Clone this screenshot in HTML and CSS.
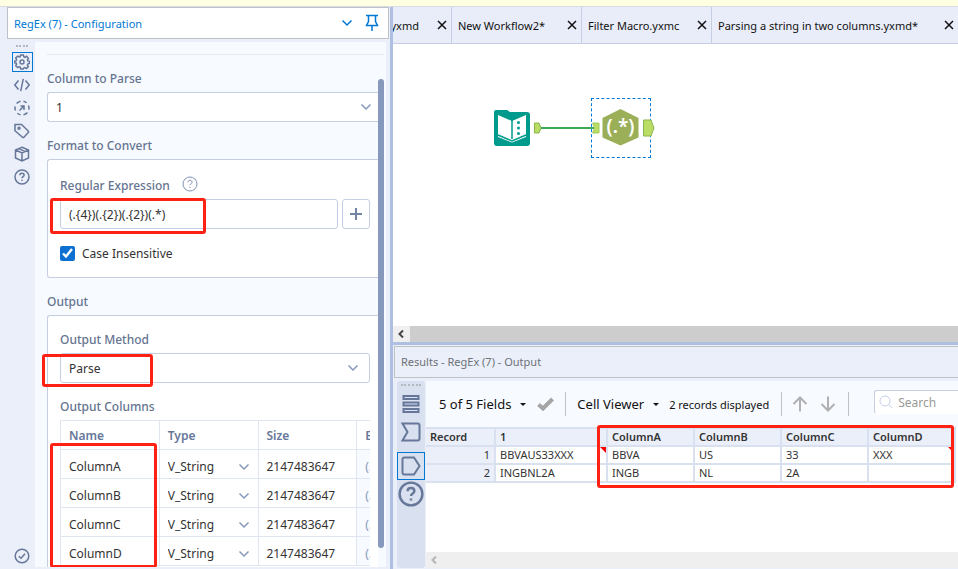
FILE: index.html
```html
<!DOCTYPE html>
<html lang="en">
<head>
  <meta charset="UTF-8">
  <meta name="viewport" content="width=device-width, initial-scale=1.0">
  <title>RegEx (7) - Configuration</title>
  <link rel="stylesheet" href="styles.css">
</head>
<body>
  <svg class="sprite" aria-hidden="true">
    <symbol id="chevron" viewBox="0 0 12 8"><path d="M1.500 1.500 6 6l4.500-4.500"/></symbol>
    <symbol id="close" viewBox="0 0 10 10"><path d="M1 1l8 8M9 1 1 9"/></symbol>
    <symbol id="help" viewBox="0 0 16 16">
      <circle cx="8" cy="8" r="7"/>
      <path d="M5.900 6.300c0-1.300 1-2 2.100-2s2.100.7 2.100 1.900C10.100 7.600 8 7.700 8 9.200M8 10.800v1.200"/>
    </symbol>
  </svg>

  <div class="notice"></div>

  <div class="workspace">
    <section class="config">
      <header class="config-title">
        <h1>RegEx (7) - Configuration</h1>
        <button class="icon-btn" aria-label="Window options"><svg class="chevron" width="12" height="8"><use href="#chevron"/></svg></button>
        <button class="icon-btn" aria-label="Pin">
          <svg width="14" height="18" viewBox="0 0 14 18"><path d="M1 1.500h12M3.500 1.500v6L1.500 11.500h11L10.500 7.500v-6M7 11.500V17"/></svg>
        </button>
      </header>

      <div class="config-main">
        <nav class="rail">
          <span class="grip"></span>
          <button class="rail-btn active" aria-label="Configuration">
            <svg width="16" height="16" viewBox="0 0 16 16"><path d="M6.600 1h2.800l.4 1.800 1.100.5 1.600-1 1.900 2-.9 1.500.4 1.100 1.600.4v2.100l-1.600.5-.5 1.200.9 1.500-1.900 1.900-1.600-.9-1.100.4L9.300 15H6.700l-.4-1.800-1.200-.5-1.500.9-1.900-1.900.9-1.600-.5-1.100L.6 8.900V7.100l1.600-.5.4-1.100L1.700 4l2-1.900 1.500.9 1.100-.4z"/><circle cx="8" cy="8" r="2"/></svg>
          </button>
          <button class="rail-btn" aria-label="XML view">
            <svg width="16" height="16" viewBox="0 0 16 16"><path d="M4.500 3.500.8 8l3.700 4.500M11.500 3.500 15.200 8l-3.700 4.500M9.300 1.800 6.700 14.200"/></svg>
          </button>
          <button class="rail-btn" aria-label="Navigation">
            <svg width="16" height="16" viewBox="0 0 16 16"><path d="M6.500 1.200A7 7 0 0 0 2.600 3.600M1.200 6.300a7 7 0 0 0 .3 4.100M3.400 13.200a7 7 0 0 0 3.100 1.600M9.500 14.800a7 7 0 0 0 3.900-2.400M14.800 9.700a7 7 0 0 0-.3-4.100M12.600 2.800a7 7 0 0 0-3.100-1.600M5.500 10.500l4.500-4.500M6.500 6H10v4"/></svg>
          </button>
          <button class="rail-btn" aria-label="Annotation">
            <svg width="16" height="16" viewBox="0 0 16 16"><path d="M1 1.500h6.500l7 6.800v1L9.700 14.500H8.800L1 7.700z"/><circle cx="5" cy="5.300" r="1"/></svg>
          </button>
          <button class="rail-btn" aria-label="Package">
            <svg width="16" height="16" viewBox="0 0 16 16"><path d="M8 1.200 14.500 4v8L8 14.900 1.500 12V4zM1.500 4 8 7l6.500-3M8 7v7.800M4.700 2.600l6.500 3"/></svg>
          </button>
          <button class="rail-btn" aria-label="Help"><svg width="16" height="16"><use href="#help"/></svg></button>
          <button class="rail-btn rail-end" aria-label="Status">
            <svg width="16" height="16" viewBox="0 0 16 16"><circle cx="8" cy="8" r="6.800"/><path d="M4.800 8.300 7 10.300l4-4.500"/></svg>
          </button>
        </nav>

        <form class="config-form">
          <div class="config-scroll">
            <label class="section-label" for="column">Column to Parse</label>
            <div class="select column-select">
              <select id="column"><option>1</option></select>
              <svg class="chevron" width="12" height="8"><use href="#chevron"/></svg>
            </div>

            <h2 class="section-label">Format to Convert</h2>
            <div class="group">
              <div class="label-row">
                <label class="field-label" for="regex">Regular Expression</label>
                <svg class="hint" width="16" height="16"><use href="#help"/></svg>
              </div>
              <div class="regex-row">
                <input class="text-input" id="regex" type="text" value="(.{4})(.{2})(.{2})(.*)">
                <button class="add-btn" type="button" aria-label="Insert expression">
                  <svg width="14" height="14" viewBox="0 0 14 14"><path d="M7 1v12M1 7h12"/></svg>
                </button>
                <span class="mark mark-regex"></span>
              </div>
              <label class="check"><input type="checkbox" checked> Case Insensitive</label>
            </div>

            <h2 class="section-label">Output</h2>
            <div class="group group-output">
              <label class="field-label" for="method">Output Method</label>
              <div class="select">
                <select id="method"><option>Parse</option></select>
                <svg class="chevron" width="12" height="8"><use href="#chevron"/></svg>
                <span class="mark mark-method"></span>
              </div>

              <h3 class="field-label">Output Columns</h3>
              <div class="columns-wrap">
                <div class="columns-clip">
                  <table class="columns">
                    <thead>
                      <tr><th>Name</th><th>Type</th><th>Size</th><th>Expression</th></tr>
                    </thead>
                    <tbody>
                      <tr>
                        <td>ColumnA</td>
                        <td><div class="cell-select"><select aria-label="Type of ColumnA"><option>V_String</option></select><svg class="chevron" width="12" height="8"><use href="#chevron"/></svg></div></td>
                        <td>2147483647</td>
                        <td>(.{4})</td>
                      </tr>
                      <tr>
                        <td>ColumnB</td>
                        <td><div class="cell-select"><select aria-label="Type of ColumnB"><option>V_String</option></select><svg class="chevron" width="12" height="8"><use href="#chevron"/></svg></div></td>
                        <td>2147483647</td>
                        <td>(.{2})</td>
                      </tr>
                      <tr>
                        <td>ColumnC</td>
                        <td><div class="cell-select"><select aria-label="Type of ColumnC"><option>V_String</option></select><svg class="chevron" width="12" height="8"><use href="#chevron"/></svg></div></td>
                        <td>2147483647</td>
                        <td>(.{2})</td>
                      </tr>
                      <tr>
                        <td>ColumnD</td>
                        <td><div class="cell-select"><select aria-label="Type of ColumnD"><option>V_String</option></select><svg class="chevron" width="12" height="8"><use href="#chevron"/></svg></div></td>
                        <td>2147483647</td>
                        <td>(.*)</td>
                      </tr>
                    </tbody>
                  </table>
                </div>
                <span class="mark mark-columns"></span>
              </div>
            </div>
          </div>
          <div class="scroll-track"><span class="scroll-thumb"></span></div>
        </form>
      </div>
    </section>

    <main class="main">
      <nav class="tabs">
        <div class="tab tab-cut"><a href="#">Workflow.yxmd</a><button class="close" aria-label="Close tab"><svg width="10" height="10"><use href="#close"/></svg></button></div>
        <div class="tab"><a href="#">New Workflow2*</a><button class="close" aria-label="Close tab"><svg width="10" height="10"><use href="#close"/></svg></button></div>
        <div class="tab"><a href="#">Filter Macro.yxmc</a><button class="close" aria-label="Close tab"><svg width="10" height="10"><use href="#close"/></svg></button></div>
        <div class="tab tab-last"><a href="#">Parsing a string in two columns.yxmd*</a><button class="close" aria-label="Close tab"><svg width="10" height="10"><use href="#close"/></svg></button></div>
      </nav>

      <div class="canvas">
        <svg class="node node-input" width="56" height="38" viewBox="0 0 56 38">
          <path fill="#009b8d" d="M3 1h11l3 2h17q3 0 3 3v28q0 3-3 3H4q-3 0-3-3V3q0-2 2-2z"/>
          <path fill="#fff" d="M5 6l14 6v21.500L5 28zM33 6l-14 6v21.500L33 28z"/>
          <path fill="none" stroke="#009b8d" stroke-width="1.500" d="M19 11v19M5 26l14 6 14-6"/>
          <circle cx="25.500" cy="13.500" r="1.500" fill="#009b8d"/><circle cx="25.500" cy="19" r="1.500" fill="#009b8d"/><circle cx="25.500" cy="24.500" r="1.500" fill="#009b8d"/>
          <path fill="#bbdc65" stroke="#86b54d" d="M41.500 14h4.500l2 5-2 5h-4.500z"/>
        </svg>
        <span class="wire"></span>
        <div class="node node-regex">
          <svg width="66" height="60" viewBox="0 0 66 60">
            <path fill="#bbdc65" stroke="#a5cc5c" d="M.5 24h6.500v10H.500l2-5z"/>
            <path fill="#9baf59" d="M28.500 10 46.500 19v19.500L28.500 46.500 10.500 38.500V19z"/>
            <path fill="#bbdc65" stroke="#86b54d" d="M51.500 21h7.500l3 8-3 8h-7.500z"/>
            <text class="node-glyph" x="28.500" y="34" text-anchor="middle">(.*)</text>
          </svg>
        </div>
      </div>

      <div class="hscroll hscroll-canvas">
        <button class="hscroll-btn" aria-label="Scroll left"><svg width="7" height="8" viewBox="0 0 7 8"><path d="M5 .5 1.500 4 5 7.500"/></svg></button>
        <span class="hscroll-thumb"></span>
      </div>

      <section class="results">
        <h2 class="results-title">Results - RegEx (7) - Output</h2>
        <div class="results-body">
          <nav class="results-rail">
            <span class="results-grip"></span>
            <button class="results-btn" aria-label="Messages">
              <svg width="20" height="20" viewBox="0 0 20 20"><path d="M2.500 2h15v3h-15zM2.500 8.500h15v3h-15zM2.500 15h15v3h-15z"/></svg>
            </button>
            <button class="results-btn" aria-label="Input anchor">
              <svg width="20" height="20" viewBox="0 0 20 20"><path d="M1.500 1.500h15q2 0 2 2v13q0 2-2 2h-15L6.500 10z"/></svg>
            </button>
            <button class="results-btn active" aria-label="Output anchor">
              <svg width="20" height="20" viewBox="0 0 20 20"><path d="M3.500 1.500H13l5.500 8.500-5.500 8.500H3.500q-2 0-2-2v-13q0-2 2-2z"/></svg>
            </button>
            <button class="results-btn" aria-label="Help"><svg width="26" height="26"><use href="#help"/></svg></button>
          </nav>

          <div class="results-content">
            <div class="toolbar">
              <button class="tool tool-fields">5 of 5 Fields <span class="caret"></span></button>
              <svg class="tick" width="17" height="14" viewBox="0 0 17 14"><path d="M1.500 7.500 6 11.500 15.500 2"/></svg>
              <span class="sep"></span>
              <button class="tool tool-viewer">Cell Viewer <span class="caret"></span></button>
              <span class="count">2 records displayed</span>
              <span class="sep"></span>
              <button class="icon-btn arrow" aria-label="Previous"><svg width="16" height="16" viewBox="0 0 16 16"><path d="M8 15.500V2M1.500 8 8 1.500 14.500 8"/></svg></button>
              <button class="icon-btn arrow" aria-label="Next"><svg width="16" height="16" viewBox="0 0 16 16"><path d="M8 .5V14M1.500 8 8 14.500 14.500 8"/></svg></button>
              <span class="sep"></span>
              <label class="search">
                <svg width="14" height="14" viewBox="0 0 14 14"><circle cx="6" cy="6" r="5"/><path d="M9.500 9.500 13 13"/></svg>
                <input type="search" placeholder="Search" aria-label="Search">
              </label>
            </div>

            <div class="grid-wrap">
              <table class="grid">
                <thead>
                  <tr><th class="record">Record</th><th class="raw">1</th><th>ColumnA</th><th>ColumnB</th><th>ColumnC</th><th>ColumnD</th></tr>
                </thead>
                <tbody>
                  <tr><td class="record">1</td><td class="flag">BBVAUS33XXX</td><td>BBVA</td><td>US</td><td>33</td><td class="flag">XXX</td></tr>
                  <tr><td class="record">2</td><td>INGBNL2A</td><td>INGB</td><td>NL</td><td>2A</td><td></td></tr>
                </tbody>
              </table>
              <span class="mark mark-grid"></span>
            </div>

            <div class="hscroll hscroll-results">
              <button class="hscroll-btn" aria-label="Scroll left"><svg width="7" height="8" viewBox="0 0 7 8"><path d="M5 .5 1.500 4 5 7.500"/></svg></button>
            </div>
          </div>
        </div>
      </section>
    </main>
  </div>
</body>
</html>
```

FILE: styles.css
```css
:root {
  --panel: #ebeff9;
  --form: #f7faff;
  --border: #c5cee3;
  --grid-line: #d9e0ef;
  --label: #65748f;
  --icon: #66779a;
  --blue: #0078d4;
  --red: #ff2113;
}

* {
  margin: 0;
  padding: 0;
  box-sizing: border-box;
}

body {
  display: flex;
  flex-direction: column;
  height: 100vh;
  overflow: hidden;
  font-family: "Noto Sans", sans-serif;
  font-size: 12px;
  color: #333;
  background-color: var(--panel);
}

button {
  background: none;
  border: none;
  font: inherit;
  color: inherit;
}

select,
input {
  font: inherit;
  color: inherit;
}

a {
  color: inherit;
  text-decoration: none;
}

svg {
  display: block;
  fill: none;
  stroke: currentColor;
}

.sprite {
  position: absolute;
  width: 0;
  height: 0;
}

.notice {
  flex: none;
  height: 6px;
  background-color: #ffffe1;
}

.workspace {
  flex: 1;
  display: flex;
  min-height: 0;
  border-top: 1px solid #d9dce3;
}

/* red highlight boxes */
.mark {
  position: absolute;
  border: 3px solid var(--red);
  border-radius: 3px;
  pointer-events: none;
}

.mark-regex {
  top: -1px;
  left: -10px;
  width: 156px;
  height: 36px;
}

.mark-method {
  top: 1px;
  left: -18px;
  width: 111px;
  height: 33px;
}

.mark-columns {
  top: 23px;
  left: -10px;
  width: 107px;
  height: 125px;
}

.mark-grid {
  top: -2px;
  left: 171px;
  width: 357px;
  height: 63px;
}

/* configuration panel */
.config {
  flex: none;
  display: flex;
  flex-direction: column;
  width: 393px;
  padding-left: 7px;
  border-right: 3px solid #afbfe2;
}

.config-title {
  display: flex;
  align-items: center;
  gap: 12px;
  height: 32px;
  margin-right: 1px;
  padding: 0 9px 0 6px;
  background-color: #fff;
  border: 1px solid #bfc2c7;
  color: var(--blue);
}

.config-title h1 {
  flex: 1;
  font-size: 11px;
  font-weight: 400;
}

.config-title svg {
  stroke-width: 1.5;
}

.config-main {
  flex: 1;
  display: flex;
  min-height: 0;
  padding: 3px 4px 2px 0;
}

.rail {
  flex: none;
  display: flex;
  flex-direction: column;
  align-items: center;
  gap: 3px;
  width: 28px;
  padding: 3px 0 1px 2px;
}

.grip {
  width: 12px;
  height: 4px;
  border-top: 2px dotted #b4b7bd;
}

.rail-btn {
  display: flex;
  align-items: center;
  justify-content: center;
  width: 21px;
  height: 20px;
  color: var(--icon);
}

.rail-btn svg {
  stroke-width: 1.5;
}

.rail-btn.active {
  outline: 1px solid var(--blue);
  outline-offset: -1px;
}

.rail-end {
  margin-top: auto;
}

.config-form {
  flex: 1;
  display: flex;
  min-width: 0;
  padding: 12px 2px 0 12px;
  overflow: hidden;
  background-color: var(--form);
}

.config-scroll {
  flex: 1;
  min-width: 0;
  padding-top: 14px;
  border-top: 1px solid #e4e9f4;
}

.scroll-track {
  flex: none;
  width: 6px;
  padding-top: 24px;
  border-top: 1px solid #e4e9f4;
}

.scroll-thumb {
  display: block;
  height: calc(100% - 19px);
  border-radius: 3px;
  background-color: #8698bb;
}

.section-label,
.field-label {
  display: block;
  font-size: 12px;
  font-weight: 500;
  line-height: 20px;
  color: var(--label);
}

.section-label {
  margin-bottom: 3px;
}

.select {
  position: relative;
  height: 30px;
}

.select select {
  width: 100%;
  height: 100%;
  padding: 0 8px;
  appearance: none;
  background-color: #fff;
  border: 1px solid var(--border);
  border-radius: 3px;
  font-size: 12px;
}

.select .chevron {
  position: absolute;
  top: 11px;
  right: 11px;
}

.chevron {
  stroke-width: 1.5;
}

.select .chevron,
.cell-select .chevron {
  color: #8698bb;
  pointer-events: none;
}

.column-select {
  margin-bottom: 14px;
}

.column-select select,
.group {
  border: 1px solid var(--border);
  border-right: none;
  border-radius: 3px 0 0 3px;
}

.column-select .chevron {
  right: 6px;
}

.group {
  margin-bottom: 14px;
  padding: 16px 8px 16px 12px;
  background-color: #fff;
}

.group-output {
  height: 300px;
  padding-top: 14px;
  margin-bottom: 0;
}

.label-row {
  display: flex;
  gap: 12px;
}

.hint {
  color: #7f90b4;
}

.regex-row {
  position: relative;
  display: flex;
  gap: 4px;
  margin: 3px 0 16px;
}

.text-input {
  flex: 1;
  min-width: 0;
  height: 30px;
  padding: 0 8px;
  background-color: #fff;
  border: 1px solid var(--border);
  border-radius: 3px;
}

.add-btn {
  display: flex;
  align-items: center;
  justify-content: center;
  width: 28px;
  height: 30px;
  border: 1px solid var(--border);
  border-radius: 3px;
  color: #7485a3;
}

.add-btn svg {
  stroke-width: 2;
}

.check {
  display: flex;
  align-items: center;
  gap: 7px;
  height: 16px;
}

.check input {
  width: 15px;
  height: 15px;
  accent-color: #0c70d2;
}

.group-output .field-label {
  margin-bottom: 3px;
}

.group-output .select {
  margin-bottom: 14px;
}

.columns-wrap {
  position: relative;
}

.columns-clip {
  overflow: hidden;
}

.columns {
  width: 396px;
  table-layout: fixed;
  border-collapse: collapse;
}

.columns th,
.columns td {
  height: 29px;
  padding: 0 8px;
  border: 1px solid #dfe5f1;
  text-align: left;
}

.columns td {
  padding-top: 5px;
}

.columns th {
  font-weight: 600;
  color: #66779a;
}

.columns td:last-child {
  background-color: var(--form);
  color: #8698bb;
}

.cell-select {
  position: relative;
}

.cell-select select {
  width: 100%;
  appearance: none;
  background: none;
  border: none;
}

.cell-select .chevron {
  position: absolute;
  top: 5px;
  right: 0;
}

/* workflow area */
.main {
  flex: 1;
  display: flex;
  flex-direction: column;
  min-width: 0;
  background-color: #fff;
}

.tabs {
  flex: none;
  display: flex;
  height: 37px;
  background-color: #e9edf9;
  border-bottom: 1px solid var(--border);
  font-size: 11px;
  color: #111;
}

.tab {
  flex: none;
  display: flex;
  align-items: center;
  justify-content: space-between;
  width: 130px;
  padding: 0 4px 0 6px;
  border-right: 1px solid var(--border);
  white-space: nowrap;
}

.tab-cut {
  width: 59px;
  justify-content: flex-end;
  gap: 18px;
  overflow: hidden;
}

.tab-last {
  flex: 1 0 auto;
  border-right: none;
}

.close svg {
  stroke-width: 1.5;
}

.canvas {
  position: relative;
  flex: 1;
  min-height: 0;
}

.node {
  position: absolute;
}

.node svg,
svg.node {
  stroke: none;
}

.node-input {
  top: 65px;
  left: 100px;
}

.node-regex {
  top: 54px;
  left: 198px;
  width: 60px;
  height: 60px;
  border: 1px dashed var(--blue);
}

.node-glyph {
  fill: #fff;
  font-size: 19px;
  font-weight: 600;
}

.wire {
  position: absolute;
  top: 83px;
  left: 148px;
  width: 53px;
  height: 2px;
  background-color: #3dab55;
}

.hscroll {
  flex: none;
  display: flex;
  height: 16px;
  background-color: #efefef;
}

.hscroll-btn {
  display: flex;
  align-items: center;
  justify-content: center;
  width: 17px;
  color: #444;
}

.hscroll-btn svg {
  stroke-width: 2;
}

.hscroll-thumb {
  flex: 1;
  background-color: #cdcdcd;
}

.hscroll-results .hscroll-btn {
  color: #b5b5b5;
}

/* results window */
.results {
  flex: none;
  display: flex;
  flex-direction: column;
  height: 227px;
  border-top: 3px solid #afbfe2;
  background-color: var(--panel);
}

.results-title {
  height: 32px;
  margin: 1px 0 0 1px;
  padding-left: 6px;
  border: 1px solid #bfc2c7;
  border-right: none;
  font-size: 11px;
  font-weight: 400;
  line-height: 30px;
  color: #6d7178;
}

.results-body {
  flex: 1;
  display: flex;
  min-height: 0;
  padding: 3px 0 1px 4px;
}

.results-rail {
  flex: none;
  display: flex;
  flex-direction: column;
  align-items: center;
  width: 28px;
  margin-right: 1px;
  border-radius: 3px;
  background-color: var(--grid-line);
}

.results-grip {
  width: 20px;
  height: 9px;
  padding-top: 3px;
}

.results-grip::before {
  content: "";
  display: block;
  border-top: 2px dotted #b4b7bd;
}

.results-btn {
  display: flex;
  align-items: center;
  justify-content: center;
  width: 28px;
  height: 28px;
  color: #66779a;
}

.results-btn svg {
  stroke-width: 2;
}

.results-btn use {
  stroke-width: 1.5;
}

.results-btn.active {
  margin-top: 6px;
  border: 1px solid var(--blue);
}

.results-content {
  flex: 1;
  display: flex;
  flex-direction: column;
  min-width: 0;
  overflow: hidden;
  background-color: #fff;
}

.toolbar {
  flex: none;
  display: flex;
  align-items: center;
  height: 46px;
  padding-left: 13px;
  background-color: var(--form);
  color: #111;
  white-space: nowrap;
}

.tool {
  display: flex;
  align-items: center;
  gap: 9px;
  font-size: 13px;
}

.caret {
  border: 3px solid transparent;
  border-top-color: #111;
  border-bottom: none;
}

.tick {
  margin: 0 11px;
  color: #a5a5a5;
  stroke-width: 4;
}

.sep {
  width: 1px;
  height: 24px;
  background-color: #bfc2c7;
}

.tool-viewer {
  margin: 0 10px 0 11px;
}

.count {
  margin-right: 12px;
  font-size: 11px;
}

.arrow {
  margin-right: 12px;
  color: #b0b0b0;
}

.arrow svg {
  stroke-width: 2;
}

.sep + .icon-btn {
  margin-left: 10px;
}

.search {
  flex: 1;
  display: flex;
  align-items: center;
  gap: 5px;
  min-width: 0;
  height: 24px;
  margin: 0 0 4px 25px;
  padding-left: 4px;
  border: 1px solid var(--border);
  border-right: none;
  border-bottom-color: #fff;
  border-radius: 3px 0 0 3px;
  background-color: #fff;
  color: #c5d0e6;
}

.search svg {
  flex: none;
}

.search input {
  flex: 1;
  min-width: 0;
  border: none;
  background: none;
}

.search input::placeholder {
  color: #999;
}

.grid-wrap {
  position: relative;
  flex: 1;
}

.grid {
  width: 530px;
  table-layout: fixed;
  border-collapse: separate;
  border-spacing: 0;
  border-top: 2px solid var(--grid-line);
  font-size: 11px;
}

.grid th,
.grid td {
  position: relative;
  height: 18px;
  padding: 0 4px;
  border-right: 2px solid var(--grid-line);
  border-bottom: 2px solid var(--grid-line);
  line-height: 16px;
  text-align: left;
}

.grid th {
  font-weight: 600;
  background-color: #ebeff9;
}

.grid .record {
  width: 70px;
  background-color: #ebeff9;
}

.grid td.record {
  text-align: right;
}

.grid .raw {
  width: 112px;
}

/* truncated-value corner */
.flag::after {
  content: "";
  position: absolute;
  top: 0;
  right: 0;
  border-top: 6px solid #f00;
  border-left: 6px solid transparent;
}
```
